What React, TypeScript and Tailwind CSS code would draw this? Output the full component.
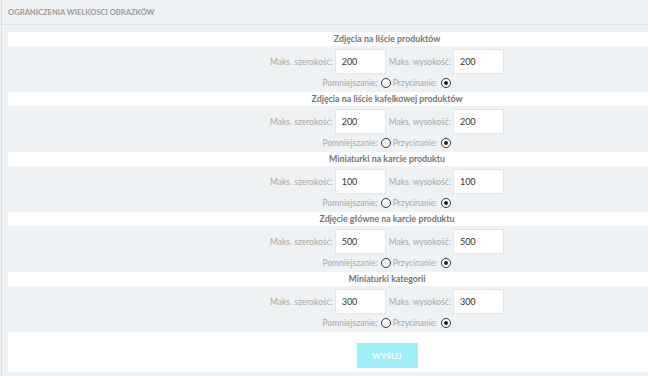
import React from 'react';

const sections = [
  { title: 'Zdjęcia na liście produktów', w: '200', h: '200' },
  { title: 'Zdjęcia na liście kafelkowej produktów', w: '200', h: '200' },
  { title: 'Miniaturki na karcie produktu', w: '100', h: '100' },
  { title: 'Zdjęcie główne na karcie produktu', w: '500', h: '500' },
  { title: 'Miniaturki kategorii', w: '300', h: '300' },
];

function Radio({ checked }: { checked?: boolean }) {
  return (
    <span className="w-[10px] h-[10px] rounded-full border border-[#333] bg-white flex items-center justify-center">
      {checked && <span className="w-[4px] h-[4px] rounded-full bg-[#222]" />}
    </span>
  );
}

function Section({ title, w, h }: { title: string; w: string; h: string }) {
  return (
    <div>
      <div className="h-[14px] bg-white flex items-center justify-center text-[8.8px] font-bold text-[#747474]">
        {title}
      </div>
      <div className="pt-[3px] flex items-center justify-center h-[28px] text-[8.5px] text-[#a8a8a8]">
        <span className="mr-[2px] mt-[1px]">Maks. szerokość:</span>
        <div className="w-[51px] h-[25px] bg-white border border-[#e3e6e9] flex items-center pl-[6px] text-[9px] text-[#333]">
          {w}
        </div>
        <span className="ml-[3px] mr-[2px] mt-[1px]">Maks. wysokość:</span>
        <div className="w-[51px] h-[25px] bg-white border border-[#e3e6e9] flex items-center pl-[6px] text-[9px] text-[#333]">
          {h}
        </div>
      </div>
      <div className="h-[18px] flex items-center justify-center text-[8.5px] text-[#a8a8a8]">
        <span className="mr-[3px]">Pomniejszanie:</span>
        <Radio />
        <span className="ml-[2px] mr-[4px]">Przycinanie:</span>
        <Radio checked />
      </div>
    </div>
  );
}

export default function App() {
  return (
    <div className="w-[648px] h-[376px] overflow-hidden bg-[#eef2f5] pl-[1px] font-['Lato','Noto_Sans',sans-serif]">
      <div className="h-full border-l border-[#dcdfe2]">
        <div className="h-[25px] border-b border-[#dde2e6] flex items-center pl-[6px] pt-[1px] text-[7.6px] font-bold text-[#9a9a9a]">
          OGRANICZENIA WIELKOSCI OBRAZKÓW
        </div>
        <div className="pt-[7px] pl-[6px]">
          <div className="w-[758px]">
            {sections.map((s) => (
              <Section key={s.title} {...s} />
            ))}
            <div className="h-[40px] bg-white pt-[11px] flex justify-center">
              <button className="w-[61px] h-[25px] bg-[#a0eefc] text-white text-[8px] font-bold tracking-[0.3px] flex items-center justify-center">
                WYŚLIJ
              </button>
            </div>
          </div>
        </div>
      </div>
    </div>
  );
}
